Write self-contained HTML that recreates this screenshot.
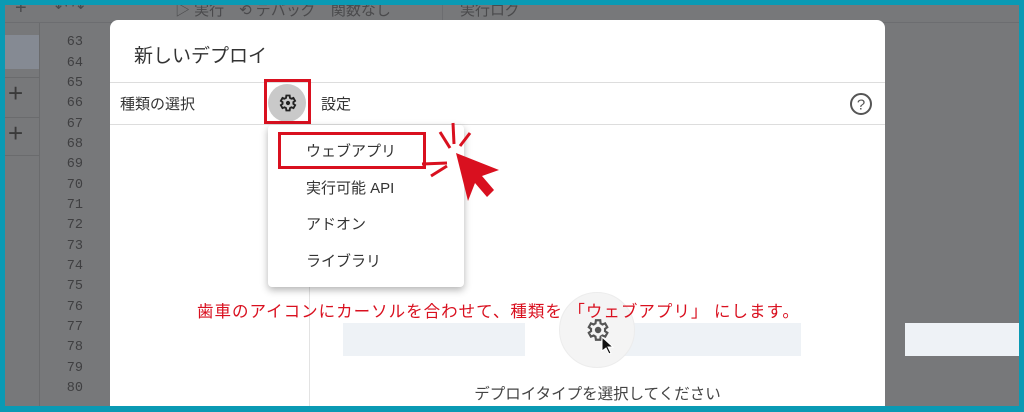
<!DOCTYPE html>
<html style="overflow:hidden"><head><meta charset="utf-8"><style>
*{margin:0;padding:0;box-sizing:border-box}
html,body{width:1024px;height:412px;overflow:hidden}
body{background:#0a9ab4;position:relative;font-family:"Liberation Sans","Noto Sans CJK JP",sans-serif}
.bg{position:absolute;left:5px;top:5px;width:1014px;height:401px;background:#77787a;overflow:hidden}
.tb{position:absolute;left:0;top:0;width:1014px;height:18px;border-bottom:1px solid #6c6d70;color:#4a4a4c;font-size:15px}
.gut{position:absolute;left:34px;top:18px;width:1px;height:390px;background:#6a6b6d}
.ln{position:absolute;left:35px;width:48px;text-align:right;font-family:"Liberation Mono",monospace;font-size:13.5px;color:#3f3f41}
.dlg{position:absolute;left:110px;top:20px;width:775px;height:386px;background:#fff;border-radius:8px 8px 0 0;overflow:hidden}
.abs{position:absolute}
.mi{position:absolute;left:306px;font-size:15px;color:#333}
</style></head><body>
<div class="bg">
<div class="tb"><span class="abs" style="left:10px;top:-8px;font-size:20px">+</span><span class="abs" style="left:50px;top:-7px">↶ ↷</span><span class="abs" style="left:170px;top:-6px">▷ 実行　⟲ デバッグ　関数なし</span><span class="abs" style="left:437px;top:0;width:1px;height:18px;background:#6c6d70"></span><span class="abs" style="left:455px;top:-6px">実行ログ</span></div>
<div class="abs" style="left:0;top:30px;width:34px;height:34px;background:#858a93"></div>
<div class="abs" style="left:0;top:72px;width:34px;height:1px;background:#6a6b6d"></div>
<div class="abs" style="left:0;top:112px;width:34px;height:1px;background:#6a6b6d"></div>
<div class="abs" style="left:0;top:150px;width:34px;height:1px;background:#6a6b6d"></div>
<div class="abs" style="left:3px;top:75px;font-size:26px;color:#3a3a3a;line-height:26px">+</div>
<div class="abs" style="left:3px;top:115px;font-size:26px;color:#3a3a3a;line-height:26px">+</div>
<div class="gut"></div>
</div>
<div class="ln" style="top:35px">63</div><div class="ln" style="top:56px">64</div><div class="ln" style="top:76px">65</div><div class="ln" style="top:96px">66</div><div class="ln" style="top:117px">67</div><div class="ln" style="top:137px">68</div><div class="ln" style="top:157px">69</div><div class="ln" style="top:178px">70</div><div class="ln" style="top:198px">71</div><div class="ln" style="top:218px">72</div><div class="ln" style="top:239px">73</div><div class="ln" style="top:259px">74</div><div class="ln" style="top:279px">75</div><div class="ln" style="top:300px">76</div><div class="ln" style="top:320px">77</div><div class="ln" style="top:340px">78</div><div class="ln" style="top:361px">79</div><div class="ln" style="top:381px">80</div>
<div class="abs" style="left:905px;top:323px;width:114px;height:33px;background:#eef2f6"></div>
<div class="dlg">
<div class="abs" style="left:24px;top:21px;font-size:19px;color:#333">新しいデプロイ</div>
<div class="abs" style="left:0;top:62px;width:775px;height:1px;background:#ddd"></div>
<div class="abs" style="left:0;top:104px;width:775px;height:1px;background:#ddd"></div>
<div class="abs" style="left:10px;top:73px;font-size:15px;color:#333">種類の選択</div>
<div class="abs" style="left:211px;top:73px;font-size:15px;color:#333">設定</div>
<div class="abs" style="left:199px;top:105px;width:1px;height:300px;background:#e3e3e3"></div>
<svg class="abs" style="left:739px;top:72px" width="24" height="24" viewBox="0 0 24 24"><circle cx="12" cy="12" r="10" fill="none" stroke="#555" stroke-width="2"/><text x="12" y="17.5" text-anchor="middle" font-size="15" font-family="Liberation Sans" fill="#555">?</text></svg>
<div class="abs" style="left:233px;top:303px;width:182px;height:33px;background:#eef2f6"></div>
<div class="abs" style="left:511px;top:303px;width:180px;height:33px;background:#eef2f6"></div>
<div class="abs" style="left:449px;top:272px;width:76px;height:76px;border-radius:50%;background:#f4f4f4;border:1px solid #ececec"></div>
<div class="abs" style="left:0;top:362px;width:775px;text-align:center;font-size:15.5px;color:#444;padding-left:200px">デプロイタイプを選択してください</div>
</div>
<div class="abs" style="left:268px;top:84px;width:38px;height:38px;border-radius:50%;background:#c9c9c9"></div>
<svg class="abs" style="left:278px;top:93px" width="20" height="20" viewBox="0 0 24 24"><path fill="none" stroke="#222" stroke-width="2.2" d="M19.4 13a7.5 7.5 0 0 0 0-2l2.1-1.6-2-3.5-2.5 1a7 7 0 0 0-1.7-1L15 3h-4l-.4 2.9a7 7 0 0 0-1.7 1l-2.5-1-2 3.5L6.5 11a7.5 7.5 0 0 0 0 2l-2.1 1.6 2 3.5 2.5-1a7 7 0 0 0 1.7 1L11 21h4l.4-2.9a7 7 0 0 0 1.7-1l2.5 1 2-3.5z" transform="translate(-1 0)"/><circle cx="12" cy="12" r="2.5" fill="#222"/></svg>
<div class="abs" style="left:264px;top:79px;width:47px;height:45px;border:3px solid #d9101f"></div>
<div class="abs" style="left:268px;top:125px;width:196px;height:162px;background:#fff;border-radius:4px;box-shadow:0 3px 8px rgba(0,0,0,.3)"></div>
<div class="mi" style="top:140px">ウェブアプリ</div>
<div class="mi" style="top:177px">実行可能 API</div>
<div class="mi" style="top:213px">アドオン</div>
<div class="mi" style="top:250px">ライブラリ</div>
<div class="abs" style="left:278px;top:132px;width:148px;height:37px;border:3px solid #d9101f"></div>
<svg class="abs" style="left:420px;top:120px" width="85" height="85" viewBox="0 0 85 85"><g stroke="#d9101f" stroke-width="3"><line x1="33" y1="3" x2="34" y2="24"/><line x1="20" y1="12" x2="30" y2="28"/><line x1="50" y1="13" x2="40" y2="26"/><line x1="2" y1="44" x2="27" y2="43"/><line x1="11" y1="56" x2="27" y2="46"/></g><path fill="#d9101f" d="M36 33L79 50 62 56 74 70 67 77 55 63 48 81z"/></svg>
<div class="abs" style="left:197px;top:298px;width:620px;font-size:16.5px;color:#d9101f;white-space:nowrap;letter-spacing:1px">歯車のアイコンにカーソルを合わせて、種類を 「ウェブアプリ」 にします。</div>
<svg class="abs" style="left:584px;top:317px" width="26" height="26" viewBox="0 0 24 24"><path fill="none" stroke="#555" stroke-width="2" d="M19.4 13a7.5 7.5 0 0 0 0-2l2.1-1.6-2-3.5-2.5 1a7 7 0 0 0-1.7-1L15 3h-4l-.4 2.9a7 7 0 0 0-1.7 1l-2.5-1-2 3.5L6.5 11a7.5 7.5 0 0 0 0 2l-2.1 1.6 2 3.5 2.5-1a7 7 0 0 0 1.7 1L11 21h4l.4-2.9a7 7 0 0 0 1.7-1l2.5 1 2-3.5z"/><circle cx="13" cy="12" r="3" fill="#555"/></svg>
<svg class="abs" style="left:601px;top:336px" width="14" height="20" viewBox="0 0 14 20"><path fill="#111" stroke="#fff" stroke-width="1" d="M1 1v14l4-3 3 6 2-1-3-6h5z"/></svg>
</body></html>
